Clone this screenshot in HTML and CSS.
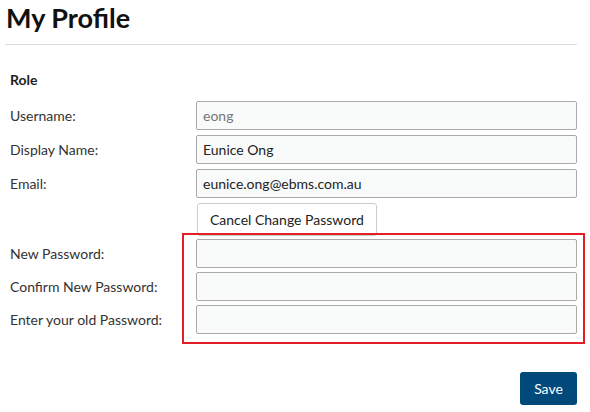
FILE: index.html
```html
<!DOCTYPE html>
<html lang="en">
<head>
<meta charset="UTF-8">
<meta name="viewport" content="width=device-width, initial-scale=1.0">
<title>My Profile</title>
<link rel="stylesheet" href="styles.css">
</head>
<body>
<div class="page">
    <h1 class="title">My Profile</h1>
    <div class="profile-form">
        <div class="section-title">Role</div>
        <div class="row">
            <label>Username:</label>
            <input type="text" class="field readonly" value="eong" readonly>
        </div>
        <div class="row">
            <label>Display Name:</label>
            <input type="text" class="field" value="Eunice Ong">
        </div>
        <div class="row">
            <label>Email:</label>
            <input type="text" class="field" value="eunice.ong@ebms.com.au">
        </div>
        <div class="row button-row">
            <span></span>
            <div><button class="btn">Cancel Change Password</button></div>
        </div>
        <div class="password-group">
            <div class="row">
                <label>New Password:</label>
                <input type="password" class="field">
            </div>
            <div class="row">
                <label>Confirm New Password:</label>
                <input type="password" class="field">
            </div>
            <div class="row">
                <label>Enter your old Password:</label>
                <input type="password" class="field">
            </div>
        </div>
        <div class="actions">
            <button class="btn-save">Save</button>
        </div>
    </div>
</div>
</body>
</html>
```

FILE: styles.css
```css
body {
    margin: 0;
    font-family: Lato, "Open Sans", sans-serif;
    color: #222;
    background: #fff;
}
.page {
    width: 572px;
    padding: 0 0 0 5px;
}
.title {
    margin: 0;
    padding: 2px 0 0 1px;
    height: 45px;
    box-sizing: border-box;
    font-size: 27px;
    font-weight: 700;
    color: #111;
    line-height: 32px;
    border-bottom: 1px solid #ddd;
}
.profile-form {
    padding-left: 5px;
}
.section-title {
    font-weight: 700;
    font-size: 14px;
    color: #222;
    margin-top: 26px;
    height: 30px;
}
.row {
    display: grid;
    grid-template-columns: 186px 381px;
    align-items: center;
    margin-bottom: 5px;
}
.row label {
    font-size: 14px;
    color: #333;
}
.field {
    box-sizing: border-box;
    height: 29px;
    width: 381px;
    border: 1px solid #aaa;
    border-radius: 2px;
    background: #f9fafa;
    font-family: inherit;
    font-size: 14px;
    color: #222;
    padding: 0 6px;
    margin: 0;
}
.field.readonly {
    color: #777;
}
.button-row {
    margin-bottom: 0;
}
.btn {
    box-sizing: border-box;
    height: 33px;
    padding: 0 12px;
    border: 1px solid #ccc;
    border-radius: 3px;
    background: #fff;
    font-family: inherit;
    font-size: 14px;
    color: #222;
    margin-left: 1px;
}
.password-group {
    position: relative;
    margin-top: 3px;
}
.password-group .row {
    margin-bottom: 4px;
}
.password-group::after {
    content: "";
    position: absolute;
    left: 172px;
    top: -6px;
    width: 399px;
    height: 107px;
    border: 2px solid #e31e26;
    pointer-events: none;
}
.actions {
    display: flex;
    justify-content: flex-end;
    width: 567px;
    margin-top: 38px;
}
.btn-save {
    width: 57px;
    height: 33px;
    border: none;
    border-radius: 3px;
    background: #004a7b;
    color: #fff;
    font-family: inherit;
    font-size: 14px;
}
```
